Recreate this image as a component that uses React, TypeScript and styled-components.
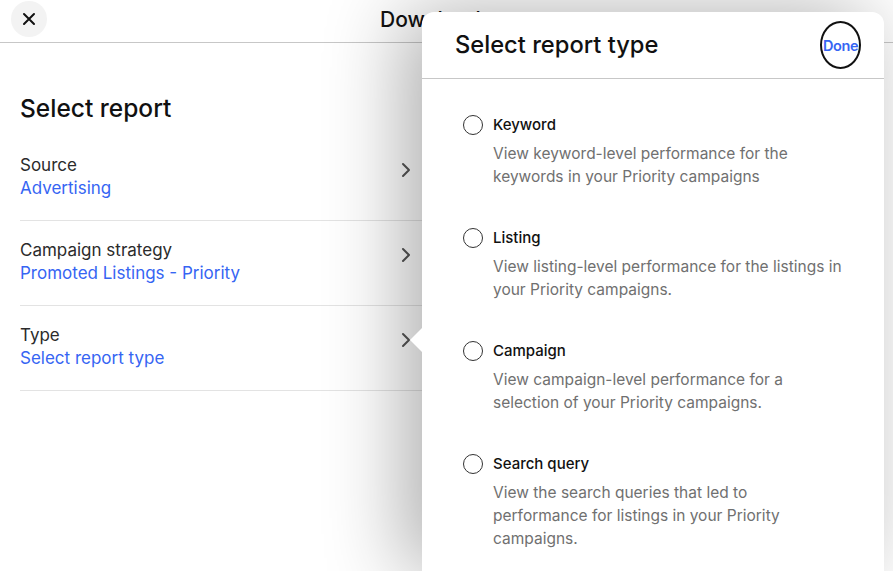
import React from 'react';
import styled, { createGlobalStyle } from 'styled-components';

const GlobalStyle = createGlobalStyle`
  html, body {
    margin: 0;
    padding: 0;
    background: #fff;
  }
  body {
    font-family: Inter, "Open Sans", Arial, sans-serif;
    color: #111;
  }
`;

const Page = styled.div`
  position: relative;
  width: 100%;
  height: 100vh;
  overflow: hidden;
  background: #fff;
`;

const Header = styled.header`
  display: flex;
  align-items: center;
  height: 42px;
  border-bottom: 1px solid #c7c7c7;
`;

const CloseButton = styled.button`
  display: flex;
  align-items: center;
  justify-content: center;
  width: 36px;
  height: 36px;
  margin: -4px 0 0 11px;
  padding: 0;
  border: none;
  border-radius: 50%;
  background: #f3f3f3;
  color: #111;
`;

const Title = styled.h1`
  margin: -4px 0 0 333px;
  font-size: 21px;
  font-weight: 500;
`;

const Main = styled.main`
  width: 402px;
  padding: 0 0 0 20px;
`;

const Heading = styled.h2`
  margin: 50px 0 13px;
  font-size: 24.5px;
  line-height: 30px;
  font-weight: 500;
`;

const Row = styled.div`
  display: flex;
  align-items: flex-start;
  justify-content: space-between;
  padding: 18px 0 20px;
  border-bottom: 1px solid #e3e3e3;
`;

const RowText = styled.div`
  display: flex;
  flex-direction: column;
  font-size: 17px;
  line-height: 23px;
`;

const RowLabel = styled.span`
  color: #2b2b2b;
`;

const RowValue = styled.span`
  color: #3665f3;
`;

const Chevron = styled.svg`
  margin: 8px 11px 0 0;
  flex-shrink: 0;
`;

const Sheet = styled.aside`
  position: absolute;
  top: 12px;
  left: 422px;
  width: 462px;
  bottom: 0;
  background: #fff;
  border-radius: 12px 12px 0 0;
  box-shadow: -18px 0 80px rgba(0, 0, 0, 0.32);
`;

const Notch = styled.div`
  position: absolute;
  left: -12px;
  top: 316px;
  width: 0;
  height: 0;
  border-top: 12px solid transparent;
  border-bottom: 12px solid transparent;
  border-right: 12px solid #fff;
`;

const SheetHeader = styled.div`
  display: flex;
  align-items: center;
  justify-content: space-between;
  height: 66px;
  padding: 0 23px 0 33px;
  border-bottom: 1px solid #c7c7c7;
`;

const SheetTitle = styled.h3`
  margin: -2px 0 0;
  font-size: 23.7px;
  font-weight: 500;
`;

const DoneButton = styled.button`
  display: flex;
  align-items: center;
  justify-content: flex-start;
  width: 41px;
  height: 48px;
  padding: 0 0 0 1px;
  border: 2px solid #111;
  border-radius: 50%;
  overflow: hidden;
  background: transparent;
  color: #3665f3;
  font-family: Inter, Arial, sans-serif;
  font-size: 14.5px;
  font-weight: 600;
  letter-spacing: -0.4px;
  white-space: nowrap;
`;

const Options = styled.div`
  display: flex;
  flex-direction: column;
  gap: 38px;
  padding: 34px 0 0 41px;
`;

const Option = styled.label`
  display: grid;
  grid-template-columns: 20px 1fr;
  column-gap: 10px;
  align-items: center;
`;

const Radio = styled.span`
  box-sizing: border-box;
  width: 20px;
  height: 20px;
  border: 1.5px solid #333;
  border-radius: 50%;
`;

const OptionLabel = styled.span`
  font-size: 15px;
  line-height: 23px;
  font-weight: 500;
  color: #111;
`;

const OptionDesc = styled.span`
  grid-column: 2;
  margin-top: 6px;
  font-size: 15.5px;
  line-height: 23px;
  color: #707070;
`;

const Line = styled.span`
  display: block;
  white-space: nowrap;
`;

const rows = [
  { label: 'Source', value: 'Advertising' },
  { label: 'Campaign strategy', value: 'Promoted Listings - Priority' },
  { label: 'Type', value: 'Select report type' },
];

const options = [
  {
    label: 'Keyword',
    lines: ['View keyword-level performance for the', 'keywords in your Priority campaigns'],
  },
  {
    label: 'Listing',
    lines: ['View listing-level performance for the listings in', 'your Priority campaigns.'],
  },
  {
    label: 'Campaign',
    lines: ['View campaign-level performance for a', 'selection of your Priority campaigns.'],
  },
  {
    label: 'Search query',
    lines: [
      'View the search queries that led to',
      'performance for listings in your Priority',
      'campaigns.',
    ],
  },
];

const App: React.FC = () => (
  <Page>
    <GlobalStyle />
    <Header>
      <CloseButton aria-label="Close">
        <svg width="14" height="14" viewBox="0 0 14 14">
          <path d="M2 2 L12 12 M12 2 L2 12" stroke="currentColor" strokeWidth="2" strokeLinecap="round" />
        </svg>
      </CloseButton>
      <Title>Download report</Title>
    </Header>
    <Main>
      <Heading>Select report</Heading>
      {rows.map((row) => (
        <Row key={row.label}>
          <RowText>
            <RowLabel>{row.label}</RowLabel>
            <RowValue>{row.value}</RowValue>
          </RowText>
          <Chevron width="10" height="16" viewBox="0 0 10 16">
            <path d="M2 2 L8 8 L2 14" fill="none" stroke="#555" strokeWidth="2" strokeLinecap="round" strokeLinejoin="round" />
          </Chevron>
        </Row>
      ))}
    </Main>
    <Sheet>
      <Notch />
      <SheetHeader>
        <SheetTitle>Select report type</SheetTitle>
        <DoneButton>Done</DoneButton>
      </SheetHeader>
      <Options>
        {options.map((opt) => (
          <Option key={opt.label}>
            <Radio />
            <OptionLabel>{opt.label}</OptionLabel>
            <OptionDesc>
              {opt.lines.map((l) => (
                <Line key={l}>{l}</Line>
              ))}
            </OptionDesc>
          </Option>
        ))}
      </Options>
    </Sheet>
  </Page>
);

export default App;
